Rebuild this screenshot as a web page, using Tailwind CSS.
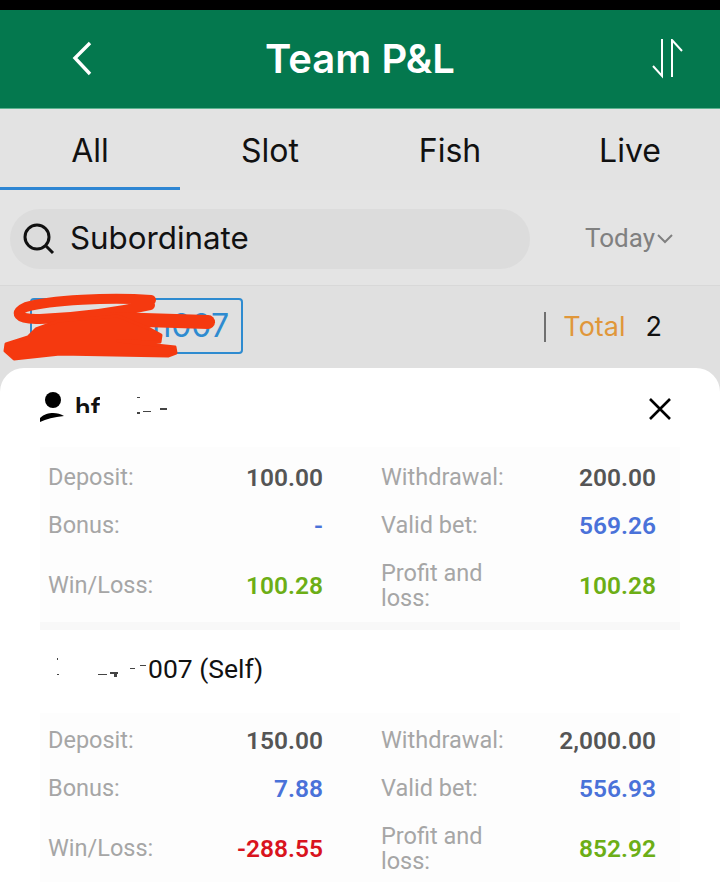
<!DOCTYPE html>
<html lang="en">

<head>
  <meta charset="UTF-8" />
  <meta name="viewport" content="width=device-width, initial-scale=1.0" />
  <title>Team P&amp;L</title>
  <script src="https://cdn.jsdelivr.net/npm/@tailwindcss/browser@4"></script>
</head>

<body class="bg-[#e0e0e0] font-['Inter','Liberation_Sans',sans-serif]">
  <div class="relative w-[720px] h-[882px] overflow-hidden">
    <div class="h-[10px] bg-black"></div>

    <!-- Header -->
    <div class="h-[99px] bg-[#04784e] border-b border-[#5fb391] flex items-center justify-between text-white">
      <div class="w-[165px] pl-[70px]">
        <svg width="24" height="36" viewBox="0 0 24 36" fill="none" stroke="white" stroke-width="3.4">
          <path d="M20 2 L5 17 L20 33" />
        </svg>
      </div>
      <div class="text-[40px] font-semibold leading-none">Team P&amp;L</div>
      <div class="w-[165px] flex justify-end pr-[36px]">
        <svg width="32" height="40" viewBox="0 0 32 40" fill="none" stroke="white" stroke-width="2">
          <path d="M10 0 V37 L1 27" />
          <path d="M20 38 V1 L30 12" />
        </svg>
      </div>
    </div>

    <!-- Tabs -->
    <div class="h-[81px] bg-[#e3e3e3] grid grid-cols-4 text-[32px] text-[#111] text-center">
      <div class="border-b-[3px] border-[#2e86d3] pt-[18px]">All</div>
      <div class="pt-[18px]">Slot</div>
      <div class="pt-[18px]">Fish</div>
      <div class="pt-[18px]">Live</div>
    </div>

    <!-- Search -->
    <div class="h-[96px] bg-[#e4e4e4] flex items-center justify-between pl-[10px] pr-[47px] pt-[2px] border-b border-[#d8d8d8]">
      <div class="w-[520px] h-[60px] rounded-[30px] bg-[#dcdcdc] flex items-center gap-[14px] px-[12px] text-[31.3px] text-[#111]">
        <svg width="34" height="34" viewBox="0 0 34 34" fill="none" stroke="#111" stroke-width="3">
          <circle cx="15" cy="15" r="12" />
          <path d="M24 24 L31 31" />
        </svg>
        <span>Subordinate</span>
      </div>
      <div class="flex items-center font-['Roboto'] text-[26px] text-[#808080]">
        <span>Today</span>
        <svg class="ml-[2px]" width="16" height="11" viewBox="0 0 16 11" fill="none" stroke="#808080" stroke-width="2">
          <path d="M1 2 L8 9 L15 2" />
        </svg>
      </div>
    </div>

    <!-- Agent row -->
    <div class="relative h-[82px] bg-[#e0e0e0] flex items-center justify-between pl-[30px] pr-[58px]">
      <div class="w-[213px] h-[56px] mt-[-3px] border-2 border-[#2e8bd0] rounded-[4px] flex items-center justify-end pr-[12px] text-[32px] text-[#2e8bd0]">n007</div>
      <div class="flex items-center text-[27px]">
        <span class="w-[2px] h-[30px] bg-[#707070] mr-[17px]"></span>
        <span class="text-[#e0973a]">Total</span>
        <span class="ml-[20px] text-[#111]">2</span>
      </div>
      <!-- red scribble over the name -->
      <svg class="absolute left-0 top-[5px]" width="225" height="70" viewBox="0 0 225 70" fill="none" stroke="#f5390f" stroke-linecap="round" stroke-linejoin="round">
        <path stroke-width="10" d="M151 9 C110 6 50 9 26 16 C14 21 16 29 40 28 C70 27 110 23 150 14" />
        <path stroke-width="14" d="M112 28 L208 31" />
        <path fill="#f5390f" stroke-width="3" d="M36 38 L58 30 L118 25 L150 38 L161 44 L160 51 L118 50 L175 56 L176 62 L168 65 L60 63 L14 68 L5 60 L6 53 L28 46 Z" />
      </svg>
    </div>

    <!-- Bottom sheet -->
    <div class="absolute left-0 right-0 top-[368px] bottom-0 bg-white rounded-t-[24px] px-[40px] font-['Roboto']">
      <div class="relative h-[79px]">
        <svg class="absolute left-0 top-[24px]" width="26" height="30" viewBox="0 0 26 30" fill="#000">
          <circle cx="13" cy="8" r="8" />
          <path d="M0 30 V26 C4 22 9 21 13 21 C17 21 21 22 24 24 C14 25 6 27 0 30 Z" />
        </svg>
        <div class="absolute left-[35px] top-[25px] h-[20px] overflow-hidden text-[28px] font-medium leading-[32px] text-[#111]">hf</div>
        <svg class="absolute left-[95px] top-[28px]" width="35" height="20" viewBox="0 0 35 20" fill="#444">
          <rect x="2" y="1" width="3" height="1" />
          <rect x="2" y="16" width="3" height="2" />
          <rect x="8" y="15" width="8" height="1" />
          <rect x="25" y="12" width="7" height="2" />
        </svg>
        <svg class="absolute right-[8px] top-[29px]" width="24" height="24" viewBox="0 0 24 24" fill="none" stroke="#000" stroke-width="2.6">
          <path d="M2 2 L22 22 M22 2 L2 22" />
        </svg>
      </div>

      <div class="bg-[#fdfdfd] h-[183px] border-b-[8px] border-[#f8f8f8] pl-[8px] pr-[24px] pt-[7px]">
        <div class="grid grid-cols-[1fr_1fr] gap-x-[58px] text-[23.5px] text-[#a6a6a6]">
          <div class="h-[48px] flex items-center justify-between"><span>Deposit:</span><b class="font-semibold text-[24.5px] text-[#555]">100.00</b></div>
          <div class="h-[48px] flex items-center justify-between"><span>Withdrawal:</span><b class="font-semibold text-[24.5px] text-[#555]">200.00</b></div>
          <div class="h-[48px] flex items-center justify-between"><span>Bonus:</span><b class="font-semibold text-[24.5px] text-[#4a72d9]">-</b></div>
          <div class="h-[48px] flex items-center justify-between"><span>Valid bet:</span><b class="font-semibold text-[24.5px] text-[#4a72d9]">569.26</b></div>
          <div class="h-[72px] flex items-center justify-between"><span>Win/Loss:</span><b class="font-semibold text-[24.5px] text-[#6cae16]">100.28</b></div>
          <div class="h-[72px] flex items-center justify-between"><span class="w-[120px] leading-[25px]">Profit and loss:</span><b class="font-semibold text-[24.5px] text-[#6cae16]">100.28</b></div>
        </div>
      </div>

      <div class="relative h-[83px] pl-[108px] pt-[19px] text-[26.5px] text-[#111]">
        <svg class="absolute left-[12px] top-[26px]" width="96" height="22" viewBox="0 0 96 22" fill="#444">
          <rect x="5" y="2" width="1" height="2" />
          <rect x="5" y="18" width="2" height="1" />
          <rect x="46" y="18" width="9" height="1" />
          <rect x="58" y="16" width="8" height="2" />
          <rect x="62" y="18" width="3" height="3" />
          <rect x="78" y="12" width="5" height="1" />
          <rect x="88" y="9" width="6" height="1" />
        </svg>
        007 (Self)
      </div>

      <div class="bg-[#fdfdfd] h-[170px] pl-[8px] pr-[24px] pt-[4px]">
        <div class="grid grid-cols-[1fr_1fr] gap-x-[58px] text-[23.5px] text-[#a6a6a6]">
          <div class="h-[48px] flex items-center justify-between"><span>Deposit:</span><b class="font-semibold text-[24.5px] text-[#555]">150.00</b></div>
          <div class="h-[48px] flex items-center justify-between"><span>Withdrawal:</span><b class="font-semibold text-[24.5px] text-[#555]">2,000.00</b></div>
          <div class="h-[48px] flex items-center justify-between"><span>Bonus:</span><b class="font-semibold text-[24.5px] text-[#4a72d9]">7.88</b></div>
          <div class="h-[48px] flex items-center justify-between"><span>Valid bet:</span><b class="font-semibold text-[24.5px] text-[#4a72d9]">556.93</b></div>
          <div class="h-[72px] flex items-center justify-between"><span>Win/Loss:</span><b class="font-semibold text-[24.5px] text-[#d9141e]">-288.55</b></div>
          <div class="h-[72px] flex items-center justify-between"><span class="w-[120px] leading-[25px]">Profit and loss:</span><b class="font-semibold text-[24.5px] text-[#6cae16]">852.92</b></div>
        </div>
      </div>
    </div>
  </div>
</body>

</html>
